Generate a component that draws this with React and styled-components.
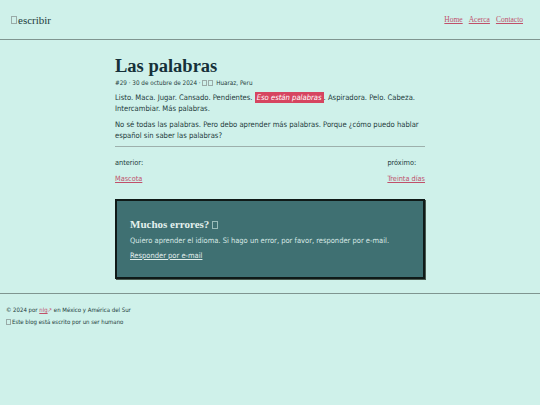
import styled, { createGlobalStyle } from "styled-components"

const Global = createGlobalStyle`
  html, body { margin: 0; padding: 0; background: #cff1ea; }
  body { font-family: "DejaVu Sans Condensed", "DejaVu Sans", Verdana, sans-serif; color: #1d3b3b; }
`

export default function App() {
  return (
    <Page>
      <Global />
      <Header>
        <Logo><Tofu />escribir</Logo>
        <Nav>
          <NavLink href="#">Home</NavLink>
          <NavLink href="#">Acerca</NavLink>
          <NavLink href="#">Contacto</NavLink>
        </Nav>
      </Header>
      <Main>
        <Title>Las palabras</Title>
        <Meta>#29 · 30 de octubre de 2024 · <Tofu small /><Tofu small /> Huaraz, Peru</Meta>
        <Para>
          Listo. Maca. Jugar. Cansado. Pendientes. <Mark>Eso están palabras</Mark>. Aspiradora. Pelo. Cabeza. Intercambiar. Más palabras.
        </Para>
        <Para>
          No sé todas las palabras. Pero debo aprender más palabras. Porque ¿cómo puedo hablar español sin saber las palabras?
        </Para>
        <Rule />
        <PostNav>
          <NavCol>
            <NavLabel>anterior:</NavLabel>
            <PostLink href="#">Mascota</PostLink>
          </NavCol>
          <NavCol>
            <NavLabel>próximo:</NavLabel>
            <PostLink href="#">Treinta días</PostLink>
          </NavCol>
        </PostNav>
        <Callout>
          <CalloutTitle>Muchos errores? <Tofu light /></CalloutTitle>
          <CalloutText>Quiero aprender el idioma. Si hago un error, por favor, responder por e-mail.</CalloutText>
          <CalloutLink href="#">Responder por e-mail</CalloutLink>
        </Callout>
      </Main>
      <Footer>
        <FootLine>© 2024 por <FootLink href="#">nlg</FootLink><Arrow>↗</Arrow> en México y América del Sur</FootLine>
        <FootLine><Tofu small />Este blog está escrito por un ser humano</FootLine>
      </Footer>
    </Page>
  )
}

const Page = styled.div`
  min-height: 405px;
  background: #cff1ea;
`
const Header = styled.header`
  height: 39px;
  border-bottom: 1px solid #7f9590;
  display: flex;
  align-items: center;
  justify-content: space-between;
  padding: 0 17px 0 11px;
`
const Logo = styled.div`
  font-family: "Liberation Serif", serif;
  font-size: 11px;
  color: #1d3b3b;
  display: flex;
  align-items: center;
`
const Tofu = styled.span`
  display: inline-block;
  width: ${p => (p.small ? "5px" : "6px")};
  height: ${p => (p.small ? "6px" : "8px")};
  border: 1px solid ${p => (p.light ? "#9bbdba" : "#9aaba8")};
  box-sizing: border-box;
  margin-right: 1px;
  vertical-align: middle;
`
const Nav = styled.nav`
  display: flex;
  gap: 6px;
`
const NavLink = styled.a`
  font-family: "Liberation Serif", serif;
  font-size: 7.5px;
  color: #c0506a;
`
const Main = styled.main`
  width: 310px;
  margin: 0 auto;
  padding-top: 15px;
`
const Title = styled.h1`
  font-family: "Liberation Serif", serif;
  font-size: 18.5px;
  line-height: 22px;
  font-weight: bold;
  color: #16313a;
  margin: 0 0 2px;
`
const Meta = styled.div`
  font-size: 6.3px;
  line-height: 8px;
  margin-bottom: 5px;
`
const Para = styled.p`
  font-size: 7.6px;
  line-height: 11px;
  margin: 0 0 5px;
`
const Mark = styled.em`
  background: #d64560;
  color: #ffffff;
  padding: 1px 2px;
`
const Rule = styled.hr`
  border: 0;
  border-top: 1px solid #9db0ac;
  margin: 2px 0 11px;
`
const PostNav = styled.div`
  display: flex;
  justify-content: space-between;
`
const NavCol = styled.div`
  display: flex;
  flex-direction: column;
  align-items: flex-start;
  gap: 7px;
`
const NavLabel = styled.span`
  font-size: 7.3px;
`
const PostLink = styled.a`
  font-size: 7.3px;
  color: #c0506a;
`
const Callout = styled.div`
  margin-top: 16px;
  background: #3f7072;
  border: 2px solid #0f1a18;
  box-shadow: 1px 1px 0 #4a5a50;
  padding: 16px 13px 16px;
  font-size: 7.5px;
  line-height: 11px;
`
const CalloutTitle = styled.div`
  font-family: "Liberation Serif", serif;
  font-weight: bold;
  font-size: 11px;
  line-height: 14px;
  color: #e4f1ee;
  margin-bottom: 4px;
`
const CalloutText = styled.p`
  color: #d8e8e5;
  margin: 0 0 4px;
`
const CalloutLink = styled.a`
  color: #e2eeec;
`
const Footer = styled.footer`
  margin-top: 14px;
  border-top: 1px solid #7f9590;
  padding: 12px 6px;
`
const FootLine = styled.div`
  font-size: 6px;
  line-height: 8px;
  margin-bottom: 4px;
`
const FootLink = styled.a`
  color: #c0506a;
`
const Arrow = styled.span`
  color: #c0506a;
`
